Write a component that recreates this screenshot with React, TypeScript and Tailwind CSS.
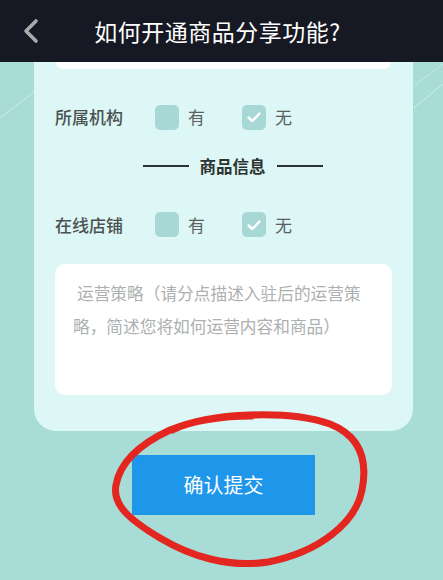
import type { JSX } from "react";

const font = { fontFamily: '"Noto Sans CJK SC", "Noto Sans", sans-serif' };

function Check({ checked }: { checked?: boolean }): JSX.Element {
  return (
    <div className="w-[24px] h-[25px] rounded-[5px] bg-[#a8d8d6] flex items-center justify-center">
      {checked && (
        <svg width="16" height="16" viewBox="0 0 16 16" fill="none">
          <path d="M2.5 8.5 L6.3 12 L13.5 4.5" stroke="white" strokeWidth="2.4" strokeLinecap="round" strokeLinejoin="round" />
        </svg>
      )}
    </div>
  );
}

function OptionRow({ label }: { label: string }): JSX.Element {
  return (
    <div className="flex items-center h-[30px]">
      <span className="w-[100px] text-[17px] font-medium text-[#4b5150]">{label}</span>
      <div className="flex items-center gap-[9px] w-[87px]">
        <Check />
        <span className="text-[17px] text-[#5a6060]">有</span>
      </div>
      <div className="flex items-center gap-[9px]">
        <Check checked />
        <span className="text-[17px] text-[#5a6060]">无</span>
      </div>
    </div>
  );
}

export default function App(): JSX.Element {
  return (
    <div className="w-[443px] h-[580px] overflow-hidden relative bg-[#a8dcd7]" style={font}>
      {/* faint diagonal lines in the background */}
      <svg className="absolute inset-0" width="443" height="580" viewBox="0 0 443 580">
        <line x1="0" y1="118" x2="34" y2="92" stroke="white" strokeOpacity="0.45" strokeWidth="1" />
        <line x1="414" y1="108" x2="443" y2="84" stroke="white" strokeOpacity="0.5" strokeWidth="1" />
        <line x1="414" y1="86" x2="443" y2="64" stroke="white" strokeOpacity="0.35" strokeWidth="1" />
      </svg>

      <div className="relative h-[62px] bg-[#161823] flex items-center">
        <svg className="absolute left-[20px] top-[18px]" width="22" height="26" viewBox="0 0 22 26" fill="none">
          <path d="M16 3 L6 13 L16 23" stroke="#a9aaad" strokeWidth="3.6" strokeLinecap="round" strokeLinejoin="round" />
        </svg>
        <h1 className="w-full text-center text-[23px] text-white tracking-[0.5px] pr-[8px]">如何开通商品分享功能?</h1>
      </div>

      <div className="relative mx-[34px] w-[379px] bg-[#dcf7f5] rounded-b-[22px] pb-[36px] px-[21px]">
        <div className="h-[7px] bg-white rounded-b-[10px] mx-[1px]" />

        <div className="pt-[33px]">
          <OptionRow label="所属机构" />
        </div>

        <div className="flex items-center justify-center gap-[11px] mt-[22px] pl-[18px]">
          <div className="w-[46px] h-[2px] bg-[#2c3332]" />
          <span className="text-[16.5px] font-bold text-[#2c3332]">商品信息</span>
          <div className="w-[46px] h-[2px] bg-[#2c3332]" />
        </div>

        <div className="mt-[31px]">
          <OptionRow label="在线店铺" />
        </div>

        <div className="mt-[24px] h-[131px] bg-white rounded-[10px] px-[18px] pt-[13px]">
          <p className="text-[16.7px] leading-[33px] text-[#adb0b0] indent-[4px]">
            运营策略（请分点描述入驻后的运营策略，简述您将如何运营内容和商品）
          </p>
        </div>
      </div>

      <div className="flex justify-center pt-[24px] pl-[4px]">
        <button className="w-[183px] h-[60px] bg-[#1e96ea] text-white text-[20px]">确认提交</button>
      </div>

      {/* red hand-drawn circle */}
      <svg className="absolute left-0 top-0 pointer-events-none" width="443" height="580" viewBox="0 0 443 580" fill="none">
        <path
          d="M172 430 C210 412 290 410 330 424 C360 436 368 460 362 490 C356 522 320 552 268 562 C228 568 190 556 160 538 C130 520 112 505 116 485 C120 462 140 444 170 430 C195 420 225 416 252 416"
          stroke="#e3261f"
          strokeWidth="7"
          strokeLinecap="round"
          strokeLinejoin="round"
        />
      </svg>
    </div>
  );
}
